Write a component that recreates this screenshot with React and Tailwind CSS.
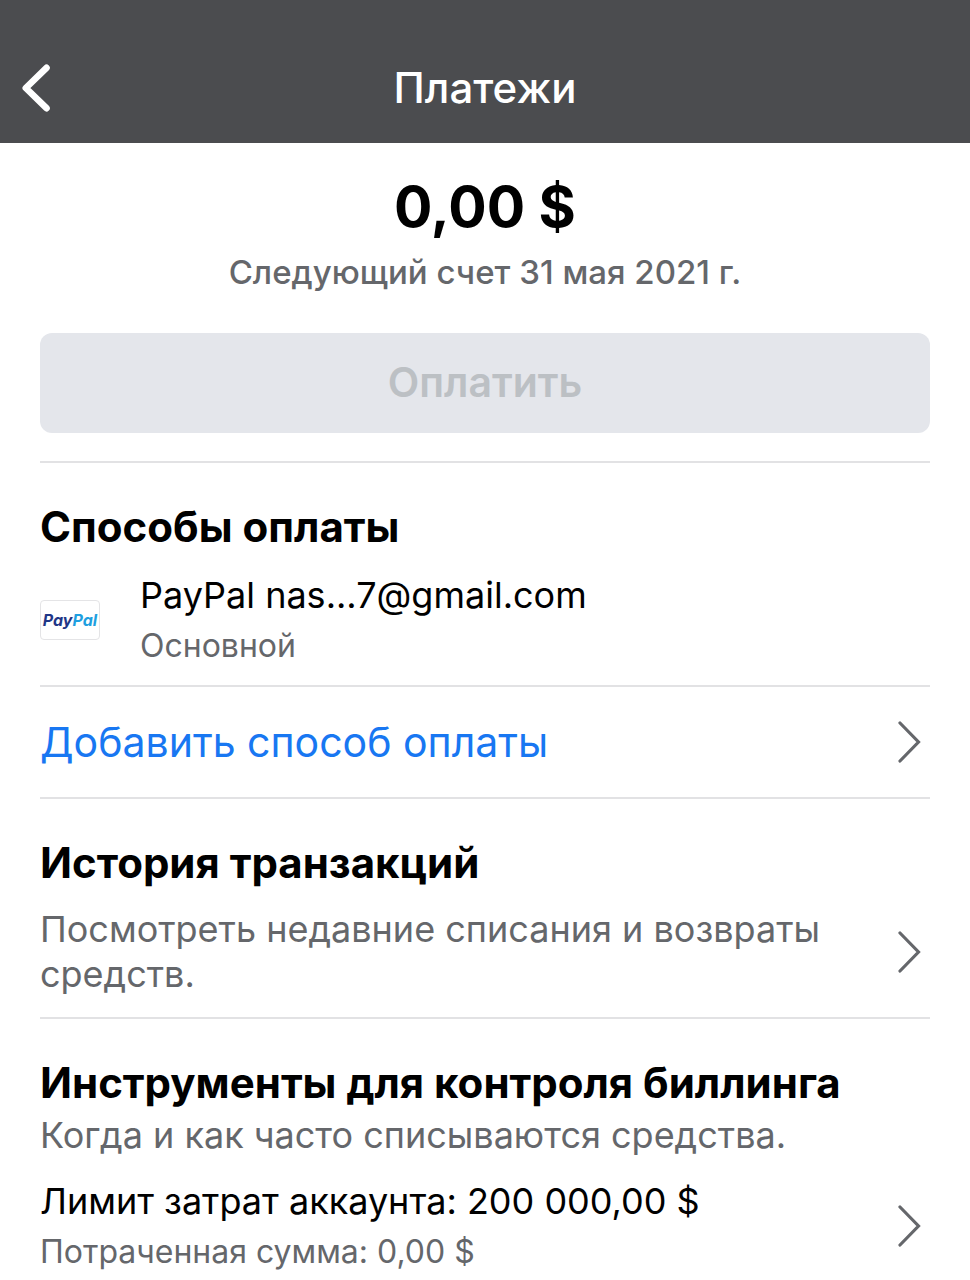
import React from 'react';

function BackIcon() {
  return (
    <svg className="w-8 h-12" viewBox="0 0 32 48" fill="none" stroke="currentColor" strokeWidth="6.6" strokeLinecap="round" strokeLinejoin="round">
      <path d="M26.5 3.8 L5.8 24 L26.5 44.2" />
    </svg>
  );
}

function ChevronIcon() {
  return (
    <svg className="w-6 h-11 shrink-0" viewBox="0 0 24 44" fill="none" stroke="#65676b" strokeWidth="3.2" strokeLinecap="round">
      <path d="M2 3 L20.5 22 L2 41" />
    </svg>
  );
}

function PayPalLogo() {
  return (
    <span className="flex items-center justify-center w-15 h-10 shrink-0 border border-[#e4e4e6] rounded-sm text-base font-bold italic">
      <span className="text-[#1f3787]">Pay</span>
      <span className="text-[#1e9fe0]">Pal</span>
    </span>
  );
}

function App() {
  return (
    <div className="min-h-screen bg-white text-black font-['Inter',sans-serif]">
      <header className="grid grid-cols-[1fr_auto_1fr] items-center px-5 pt-[55px] pb-[22px] bg-[#4b4c4f] text-white">
        <button type="button" aria-label="Назад" className="justify-self-start">
          <BackIcon />
        </button>
        <h1 className="text-[42px] leading-[66px] font-medium">Платежи</h1>
      </header>

      <main className="px-10">
        <section className="pt-7 pb-7 border-b-2 border-[#e2e2e4] text-center">
          <p className="text-[57px] leading-[72px] font-bold">0,00 $</p>
          <p className="mt-2 text-[33px] leading-[42px] font-medium text-[#65676b]">Следующий счет 31 мая 2021 г.</p>
          <button type="button" disabled className="mt-10 w-full h-25 rounded-xl bg-[#e4e6eb] text-[41px] font-semibold text-[#bcc0c4]">
            Оплатить
          </button>
        </section>

        <section>
          <h2 className="pt-9 text-[42px] leading-[56px] font-bold">Способы оплаты</h2>
          <div className="flex items-center gap-10 py-[14px] border-b-2 border-[#e2e2e4]">
            <PayPalLogo />
            <div>
              <p className="text-[36px] leading-[52px]">PayPal nas...7@gmail.com</p>
              <p className="text-[32px] leading-[50px] text-[#65676b]">Основной</p>
            </div>
          </div>
          <a href="#add" className="flex items-center justify-between pr-2 py-7 border-b-2 border-[#e2e2e4] text-[41px] leading-[54px] text-[#1877f2]">
            Добавить способ оплаты
            <ChevronIcon />
          </a>
        </section>

        <section className="border-b-2 border-[#e2e2e4]">
          <h2 className="pt-9 text-[42px] leading-[56px] font-bold">История транзакций</h2>
          <a href="#history" className="flex items-center justify-between pr-2 pt-4 pb-5 text-[36px] leading-[45px] text-[#65676b]">
            <span className="max-w-200">Посмотреть недавние списания и возвраты средств.</span>
            <ChevronIcon />
          </a>
        </section>

        <section>
          <h2 className="pt-9 text-[42px] leading-[56px] font-bold">Инструменты для контроля биллинга</h2>
          <p className="text-[36px] leading-[48px] text-[#65676b]">Когда и как часто списываются средства.</p>
          <a href="#limit" className="flex items-center justify-between pr-2 pt-4">
            <span>
              <span className="block text-[36px] leading-[52px]">Лимит затрат аккаунта: 200 000,00 $</span>
              <span className="block text-[32px] leading-[50px] text-[#65676b]">Потраченная сумма: 0,00 $</span>
            </span>
            <ChevronIcon />
          </a>
        </section>
      </main>
    </div>
  );
}

export default App;
